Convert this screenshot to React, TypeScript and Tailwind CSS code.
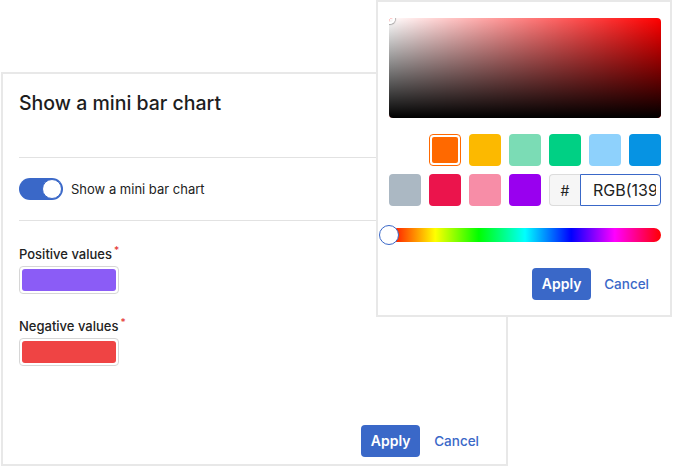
import React from "react";

const row1 = ["#FF6900", "#FCB900", "#7BDCB5", "#00D084", "#8ED1FC", "#0693E3"];
const row2 = ["#ABB8C3", "#EB144C", "#F78DA7", "#9900EF"];

export default function App() {
  return (
    <div className="relative w-[675px] h-[469px] bg-white overflow-hidden font-['Inter',sans-serif] text-[#222]">
      <div className="pt-[72px] pl-[1px]">
        <div className="w-[507px] h-[394px] border-2 border-[#e8e8e8] bg-white flex flex-col px-4">
          <div className="mt-[15px] text-[19.5px] leading-[28px] font-medium text-[#1d1d1d]">Show a mini bar chart</div>
          <div className="mt-[40px] h-px bg-[#e2e2e2]" />
          <div className="mt-5 flex items-center gap-2">
            <div className="w-[44px] h-[22px] rounded-full bg-[#3a68c8] flex items-center justify-end pr-px">
              <div className="w-[20px] h-[20px] rounded-full bg-white border border-[#3a68c8]" />
            </div>
            <span className="text-[13px] leading-[18px]">Show a mini bar chart</span>
          </div>
          <div className="mt-5 h-px bg-[#e2e2e2]" />
          <div className="mt-[24px] text-[13px] leading-[18px] font-medium">
            Positive values<sup className="text-[#e53935] text-[10px] ml-[2px]">*</sup>
          </div>
          <div className="mt-[3px] w-[100px] h-[28px] border border-[#d6d6d6] rounded-[4px] p-[2px]">
            <div className="w-full h-full rounded-[3px] bg-[#8b5cf6]" />
          </div>
          <div className="mt-[23px] text-[13px] leading-[18px] font-medium">
            Negative values<sup className="text-[#e53935] text-[10px] ml-[2px]">*</sup>
          </div>
          <div className="mt-[3px] w-[100px] h-[28px] border border-[#d6d6d6] rounded-[4px] p-[2px]">
            <div className="w-full h-full rounded-[3px] bg-[#ef4444]" />
          </div>
          <div className="mt-auto mb-[7px] flex items-center justify-end gap-[14px] pr-[11px]">
            <button className="w-[59px] h-[32px] rounded-[4px] bg-[#3a68c8] text-white text-[14px] leading-[20px] font-semibold">Apply</button>
            <button className="text-[#3a68c8] text-[13.5px] leading-[20px] font-medium">Cancel</button>
          </div>
        </div>
      </div>

      <div className="absolute left-[376px] top-0 w-[296px] h-[317px] border-2 border-[#e8e8e8] bg-white pl-[11px] pr-[9px] pt-4">
        <div className="relative w-[272px] h-[100px] rounded-[4px] overflow-hidden bg-[#ff0000]">
          <div className="absolute inset-0 bg-gradient-to-r from-white to-transparent" />
          <div className="absolute inset-0 bg-gradient-to-t from-black to-transparent" />
          <div className="absolute -left-[4px] -top-[4px] w-[10px] h-[10px] rounded-full border-2 border-white shadow-[0_0_1px_1px_rgba(0,0,0,0.3)]" />
        </div>
        <div className="mt-4 grid grid-cols-[repeat(7,32px)] gap-2">
          <div className="w-8 h-8" />
          {row1.map((c, i) =>
            i === 0 ? (
              <div key={c} className="w-8 h-8 rounded-[4px] border border-[#FF6900] p-[2px] bg-white">
                <div className="w-full h-full rounded-[2px]" style={{ backgroundColor: c }} />
              </div>
            ) : (
              <div key={c} className="w-8 h-8 rounded-[4px]" style={{ backgroundColor: c }} />
            )
          )}
          {row2.map((c) => (
            <div key={c} className="w-8 h-8 rounded-[4px]" style={{ backgroundColor: c }} />
          ))}
          <div className="col-span-3 flex h-8">
            <div className="w-[31px] h-8 flex items-center justify-center bg-[#f6f6f6] border border-[#dcdcdc] border-r-0 rounded-l-[4px] text-[14px]">#</div>
            <input
              readOnly
              value="RGB(139, 92, 246)"
              className="w-[81px] h-8 border border-[#3a68c8] rounded-r-[4px] pl-3 pr-1 text-[16px] text-[#222] outline-none font-['Inter',sans-serif]"
            />
          </div>
        </div>
        <div className="relative mt-[22px] h-[14px] w-[272px] rounded-full bg-[linear-gradient(to_right,#f00_0%,#ff0_17%,#0f0_33%,#0ff_50%,#00f_67%,#f0f_83%,#f00_100%)]">
          <div className="absolute -left-[10px] -top-[3px] w-5 h-5 rounded-full bg-white border border-[#3a68c8]" />
        </div>
        <div className="mt-[26px] flex items-center justify-end gap-[13px] pr-[12px]">
          <button className="w-[59px] h-[32px] rounded-[4px] bg-[#3a68c8] text-white text-[14px] leading-[20px] font-semibold">Apply</button>
          <button className="text-[#3a68c8] text-[13.5px] leading-[20px] font-medium">Cancel</button>
        </div>
      </div>
    </div>
  );
}
